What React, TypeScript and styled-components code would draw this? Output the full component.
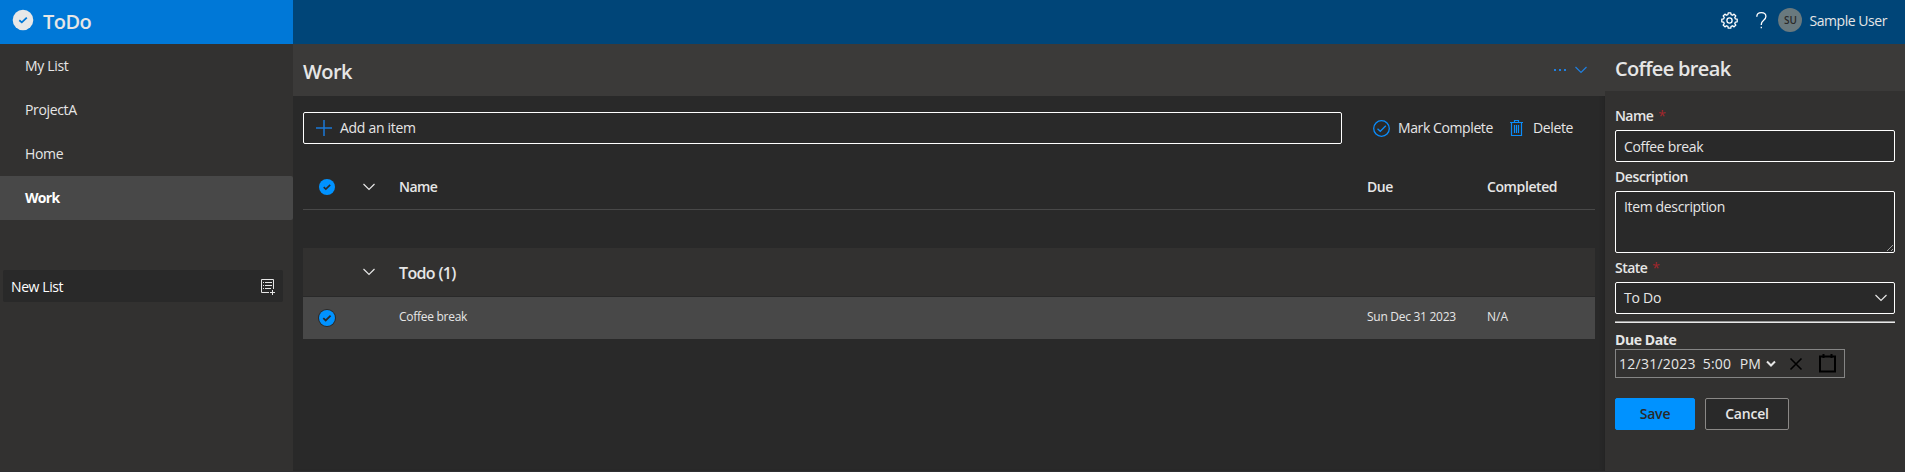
import React from "react";
import styled, { createGlobalStyle, css } from "styled-components";

const GlobalStyle = createGlobalStyle`
  * { box-sizing: border-box; }
  body { margin: 0; background: #fff; font-family: "Open Sans", "Noto Sans", sans-serif; font-size: 14px; color: #e8e8e8; }
  svg { display: block; flex: none; }
`;

const Label = styled.span<{ $size?: number; $weight?: number; $track?: number; $color?: string; $line?: number; $drop?: number }>`
  display: block;
  white-space: nowrap;
  font-size: ${p => p.$size ?? 14}px;
  font-weight: ${p => p.$weight ?? 400};
  letter-spacing: ${p => p.$track ?? 0}px;
  line-height: ${p => p.$line ?? 20}px;
  color: ${p => p.$color ?? "#e6e6e6"};
  padding-top: ${p => p.$drop ?? 0}px;
`;

const Shell = styled.div`
  width: 1905px;
  height: 472px;
  display: flex;
  flex-direction: column;
  overflow: hidden;
  background: #292929;
  border-bottom: 1px solid #2f2f32;
`;
const TopBar = styled.header`
  display: flex;
  height: 44px;
  flex: none;
  background: #004578;
`;
const Brand = styled.div`
  display: flex;
  width: 293px;
  padding: 0 0 0 12px;
  gap: 9px;
  background: #0078d7;
  svg { margin-top: 9px; }
`;
const UserArea = styled.div`
  display: flex;
  flex: 1;
  justify-content: flex-end;
  align-items: flex-start;
  padding: 8px 18px 0 0;
`;
const Avatar = styled.div`
  display: flex;
  align-items: center;
  justify-content: center;
  width: 24px;
  height: 24px;
  margin: 0 7px 0 11px;
  border-radius: 50%;
  background: #69797e;
`;
const GearIcon = styled.svg`
  margin-top: 4px;
`;
const HelpIcon = styled.svg`
  margin: 4px 0 0 18px;
`;
const Body = styled.div`
  display: flex;
  flex: 1;
  min-height: 0;
`;
const Sidebar = styled.nav`
  width: 293px;
  background: #323130;
`;
const NavRow = styled.div<{ $active?: boolean }>`
  display: flex;
  align-items: center;
  height: 44px;
  padding: 0 0 0 25px;
  ${p => p.$active && css`background: #484848; border-radius: 0 2px 2px 0;`}
`;
const NewList = styled.div`
  display: flex;
  align-items: center;
  justify-content: space-between;
  width: 280px;
  height: 32px;
  margin: 50px 0 0 3px;
  padding: 1px 7px 0 8px;
  border-radius: 2px;
  background: #292929;
`;
const Main = styled.main`
  width: 1312px;
  box-shadow: inset -4px 0 4px -3px #222;
`;
const MainHeader = styled.div`
  display: flex;
  justify-content: space-between;
  height: 52px;
  padding: 0 18px 0 10px;
  background: #3b3a39;
`;
const HeaderActions = styled.div`
  display: flex;
  gap: 8px;
  padding-top: 20px;
`;
const Toolbar = styled.div`
  display: flex;
  padding: 16px 0 0 10px;
`;
const AddField = styled.div`
  display: flex;
  align-items: center;
  gap: 8px;
  width: 1039px;
  height: 32px;
  padding-left: 12px;
  border: 1px solid #fff;
  border-radius: 2px;
`;
const Action = styled.div<{ $left: number; $gap: number }>`
  display: flex;
  align-items: center;
  gap: ${p => p.$gap}px;
  height: 32px;
  margin-left: ${p => p.$left}px;
`;
const Table = styled.div`
  width: 1292px;
  margin-left: 10px;
`;
const Row = styled.div<{ $kind: "head" | "group" | "item" }>`
  display: grid;
  grid-template-columns: 48px 48px 968px 120px 1fr;
  align-items: center;
  ${p => p.$kind === "head" && css`height: 42px; margin: 24px 0 38px; border-bottom: 1px solid #484848; padding-bottom: 4px;`}
  ${p => p.$kind === "group" && css`height: 49px; background: #323130; border-bottom: 1px solid #292929;`}
  ${p => p.$kind === "item" && css`height: 42px; background: #484848;`}
`;
const Cell = styled.div<{ $indent?: number; $up?: number }>`
  padding-left: ${p => p.$indent ?? 0}px;
  padding-bottom: ${p => p.$up ?? 0}px;
`;
const Panel = styled.aside`
  width: 300px;
  background: #323130;
`;
const PanelHeader = styled.div`
  height: 47px;
  padding-left: 10px;
  background: #3b3a39;
`;
const Form = styled.div`
  padding: 10px 10px 0;
`;
const FieldLabel = styled.div`
  display: flex;
  gap: 5px;
  height: 29px;
  padding-top: 5px;
`;
const Field = styled.div<{ $height: number }>`
  display: flex;
  position: relative;
  justify-content: space-between;
  height: ${p => p.$height}px;
  padding: 5px 7px 0 8px;
  border: 1px solid #fff;
  border-radius: 2px;
  background: #292929;
  svg { margin-top: 6px; }
`;
const Grip = styled.svg`
  position: absolute;
  right: 0;
  bottom: 0;
`;
const Divider = styled.div`
  height: 2px;
  margin-top: 7px;
  background: #e8e8e8;
  border-top: 1px solid #9a9a9a;
`;
const DateField = styled.div`
  display: flex;
  width: 230px;
  height: 29px;
  padding: 4px 0 0 3px;
  border: 1px solid #858585;
`;
const DatePart = styled.div<{ $width: number }>`
  width: ${p => p.$width}px;
`;
const Buttons = styled.div`
  display: flex;
  gap: 10px;
  margin-top: 20px;
`;
const Button = styled.div<{ $primary?: boolean }>`
  display: flex;
  align-items: center;
  justify-content: center;
  width: ${p => (p.$primary ? 80 : 84)}px;
  height: 32px;
  border-radius: 2px;
  border: 1px solid ${p => (p.$primary ? "#0092ff" : "#8a8886")};
  background: ${p => (p.$primary ? "#0092ff" : "#292929")};
`;

const CheckDisc = ({ size, fill, mark, ring }: { size: number; fill: string; mark: string; ring?: string }) => (
  <svg width={size} height={size} viewBox="0 0 18 18">
    {ring && <circle cx="9" cy="9" r="9" fill={ring} />}
    <circle cx="9" cy="9" r={ring ? 8 : 9} fill={fill} />
    <path d="M5.3 9.2 7.7 11.4 12.6 6.6" fill="none" stroke={mark} strokeWidth="1.8" />
  </svg>
);
const BrandMark = () => (
  <svg width="22" height="22" viewBox="0 0 22 22">
    <circle cx="11" cy="11" r="10.3" fill="#e8e8e8" />
    <path d="M7.3 11.3 9.8 13.4 14.8 8.6" fill="none" stroke="#0078d7" strokeWidth="1.8" />
  </svg>
);
const Chevron = ({ color = "#e6e6e6" }: { color?: string }) => (
  <svg width="12" height="8" viewBox="0 0 12 8">
    <path d="M.5 1 6 6.5 11.5 1" fill="none" stroke={color} strokeWidth="1.2" />
  </svg>
);
const gearPath = (() => {
  const pts: string[] = [];
  for (let i = 0; i < 8; i++) {
    [[-15, 6.1], [-9.5, 7.8], [9.5, 7.8], [15, 6.1]].forEach(([d, r]) => {
      const a = ((i * 45 + d) * Math.PI) / 180;
      pts.push(`${(8.5 + r * Math.cos(a)).toFixed(2)} ${(8.5 + r * Math.sin(a)).toFixed(2)}`);
    });
  }
  return `M${pts.join("L")}Z`;
})();
const Gear = () => (
  <GearIcon width="17" height="17" viewBox="0 0 17 17" fill="none" stroke="#fff" strokeWidth="1.3" strokeLinejoin="round">
    <path d={gearPath} />
    <circle cx="8.5" cy="8.5" r="2.6" />
  </GearIcon>
);
const Help = () => (
  <HelpIcon width="11" height="17" viewBox="0 0 11 17" fill="none" stroke="#fff" strokeWidth="1.3">
    <path d="M.8 4.8C.8 2.2 2.8.7 5.3.7s4.6 1.4 4.6 3.9c0 3.6-4.6 3.7-4.6 7.6V13M5.3 14.8v1.5" />
  </HelpIcon>
);
const ListPlus = () => (
  <svg width="16" height="16" viewBox="0 0 16 16" fill="none" stroke="#e6e6e6">
    <path d="M9 13.5H1.5v-13h12V10M3 3.5h1M5 3.5h7M3 6.5h1M5 6.5h7M3 9.5h1M5 9.5h6M12.5 11v5M10 13.5h5" />
  </svg>
);
const Plus = () => (
  <svg width="16" height="16" viewBox="0 0 16 16" stroke="#1a78d8" strokeWidth="1.5">
    <path d="M0 8h16M8 0v16" />
  </svg>
);
const CheckRing = () => (
  <svg width="17" height="17" viewBox="0 0 17 17" fill="none" stroke="#0b8cfa" strokeWidth="1.3">
    <circle cx="8.5" cy="8.5" r="7.8" />
    <path d="M4.5 8.8 7.3 11.3 12.8 5.8" />
  </svg>
);
const Trash = () => (
  <svg width="13" height="17" viewBox="0 0 13 17" fill="none" stroke="#0b8cfa" strokeWidth="1.2">
    <path d="M0 2.5h13M1.5 2.5v13h10v-13M4.5 2.5v-2h4v2M4.5 5v8M6.5 5v8M8.5 5v8" />
  </svg>
);

const lists = [
  { name: "My List", track: -0.33 },
  { name: "ProjectA", track: -0.36 },
  { name: "Home", track: -0.36 },
];

export default function App() {
  return (
    <Shell>
      <GlobalStyle />
      <TopBar>
        <Brand>
          <BrandMark />
          <Label $size={20} $weight={600} $track={-0.55} $line={44}>ToDo</Label>
        </Brand>
        <UserArea>
          <Gear />
          <Help />
          <Avatar><Label $size={10} $weight={600} $color="#292929" $line={24}>SU</Label></Avatar>
          <Label $track={-0.45} $drop={3}>Sample User</Label>
        </UserArea>
      </TopBar>
      <Body>
        <Sidebar>
          {lists.map(l => (
            <NavRow key={l.name}><Label $track={l.track}>{l.name}</Label></NavRow>
          ))}
          <NavRow $active><Label $weight={700} $track={-0.7} $color="#fff">Work</Label></NavRow>
          <NewList><Label $track={-0.4} $color="#fff">New List</Label><ListPlus /></NewList>
        </Sidebar>
        <Main>
          <MainHeader>
            <Label $size={20} $weight={600} $track={-0.6} $line={28} $drop={14}>Work</Label>
            <HeaderActions>
              <svg width="14" height="12" viewBox="0 0 14 12" fill="#1f7fe0">
                <rect x="1" y="5" width="2" height="2" /><rect x="6" y="5" width="2" height="2" /><rect x="11" y="5" width="2" height="2" />
              </svg>
              <svg width="12" height="12" viewBox="0 0 12 12" fill="none" stroke="#1f7fe0" strokeWidth="1.2"><path d="M.5 3 6 8.5 11.5 3" /></svg>
            </HeaderActions>
          </MainHeader>
          <Toolbar>
            <AddField><Plus /><Label $track={-0.3}>Add an item</Label></AddField>
            <Action $left={31} $gap={8}><CheckRing /><Label $track={-0.4}>Mark Complete</Label></Action>
            <Action $left={17} $gap={10}><Trash /><Label $track={-0.35}>Delete</Label></Action>
          </Toolbar>
          <Table>
            <Row $kind="head">
              <Cell $indent={16}><CheckDisc size={16} fill="#0092ff" mark="#292929" /></Cell>
              <Cell $indent={12}><Chevron /></Cell>
              <Label $weight={600} $track={-0.55} $drop={1}>Name</Label>
              <Label $weight={600} $track={-0.4} $drop={1}>Due</Label>
              <Label $weight={600} $track={-0.4} $drop={1}>Completed</Label>
            </Row>
            <Row $kind="group">
              <span />
              <Cell $indent={12}><Chevron /></Cell>
              <Label $size={16} $weight={600} $track={-0.65} $drop={2}>Todo (1)</Label>
            </Row>
            <Row $kind="item">
              <Cell $indent={15}><CheckDisc size={18} fill="#0092ff" mark="#292929" ring="#292929" /></Cell>
              <span />
              <Cell $up={2}><Label $size={12} $track={-0.28}>Coffee break</Label></Cell>
              <Cell $up={2}><Label $size={12} $track={-0.28}>Sun Dec 31 2023</Label></Cell>
              <Cell $up={2}><Label $size={12}>N/A</Label></Cell>
            </Row>
          </Table>
        </Main>
        <Panel>
          <PanelHeader><Label $size={20} $weight={600} $track={-0.65} $line={28} $drop={11}>Coffee break</Label></PanelHeader>
          <Form>
            <FieldLabel><Label $weight={600} $track={-0.6}>Name</Label><Label $color="#a4262c">*</Label></FieldLabel>
            <Field $height={32}><Label $track={-0.33} $drop={1}>Coffee break</Label></Field>
            <FieldLabel><Label $weight={600} $track={-0.42}>Description</Label></FieldLabel>
            <Field $height={62}>
              <Label $track={-0.35}>Item description</Label>
              <Grip width="8" height="8" viewBox="0 0 8 8" stroke="#aaa" strokeWidth=".9"><path d="M1 7 7 1M5 7 7 5" /></Grip>
            </Field>
            <FieldLabel><Label $weight={600} $track={-0.55}>State</Label><Label $color="#a4262c">*</Label></FieldLabel>
            <Field $height={32}><Label $track={-0.25}>To Do</Label><Chevron /></Field>
            <Divider />
            <Label $weight={700} $track={-0.42} $line={18} $drop={8}>Due Date</Label>
            <DateField>
              <DatePart $width={86}><Label $track={0.25}>12/31/2023</Label></DatePart>
              <DatePart $width={38}><Label $track={0.2}>5:00</Label></DatePart>
              <DatePart $width={27}><Label>PM</Label></DatePart>
              <svg width="78" height="20" viewBox="0 0 78 20" fill="none">
                <path d="M1 7.5 5 11.5 9 7.5" stroke="#e6e6e6" strokeWidth="2" />
                <path d="M24.5 4.5 35.5 15.5M35.5 4.5 24.5 15.5" stroke="#000" strokeWidth="1.6" />
                <path d="M54 2.5h15v15H54zM57.5 0v4M65.5 0v4" stroke="#000" strokeWidth="2" />
              </svg>
            </DateField>
            <Buttons>
              <Button $primary><Label $weight={600} $track={-0.2} $color="#292929">Save</Label></Button>
              <Button><Label $weight={600} $track={-0.2}>Cancel</Label></Button>
            </Buttons>
          </Form>
        </Panel>
      </Body>
    </Shell>
  );
}
